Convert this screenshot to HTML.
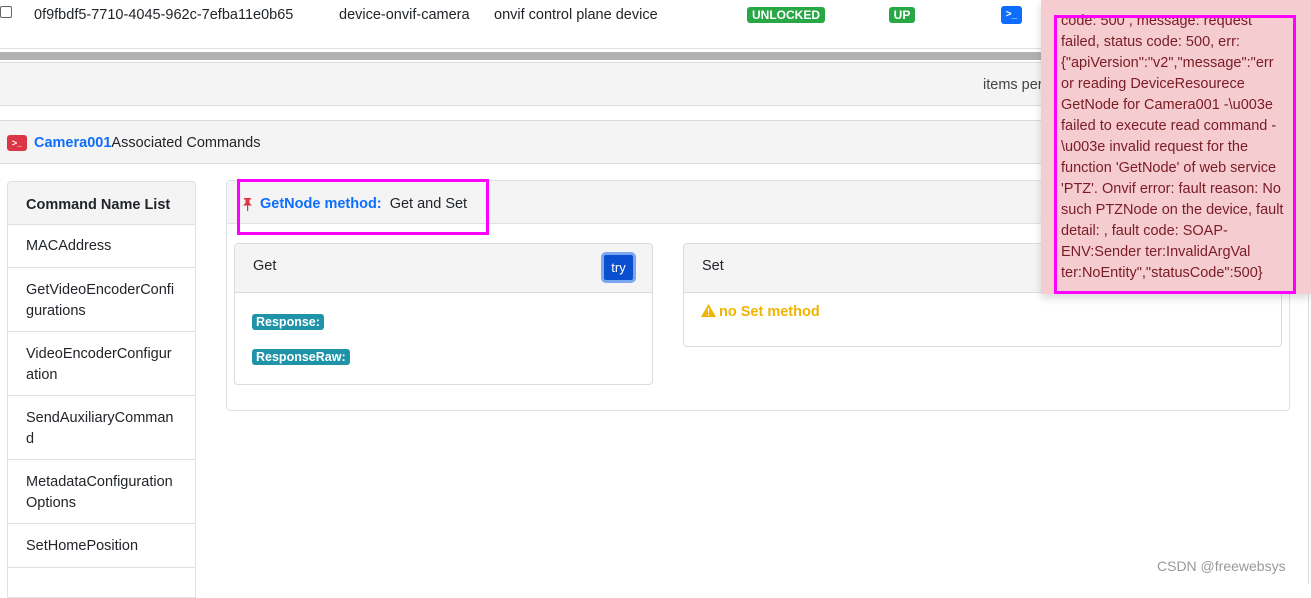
<!DOCTYPE html>
<html><head><meta charset="utf-8"><style>
*{box-sizing:border-box;margin:0;padding:0}
body{width:1311px;height:584px;overflow:hidden;background:#fff;font-family:"Liberation Sans",Arial,sans-serif;font-size:14.5px;color:#212529;position:relative}
.a{position:absolute;white-space:nowrap}
.badge{position:absolute;color:#fff;font-weight:bold;font-size:12px;border-radius:3px;text-align:center;line-height:16px}
.li{position:absolute;left:7px;width:189px;border:1px solid #dee2e6;border-top:none;padding:2px 18px 0;line-height:21px;display:flex;align-items:center;white-space:nowrap}
.tag{position:absolute;background:#1f93a8;color:#fff;font-weight:bold;font-size:12.5px;border-radius:3px;padding:0 4px;line-height:16px;height:16px}
</style></head><body>
<div class="a" style="left:0;top:6px;width:12px;height:12px;border:1px solid #666;border-radius:2px"></div>
<div class="a" style="left:34px;top:7px">0f9fbdf5-7710-4045-962c-7efba11e0b65</div>
<div class="a" style="left:339px;top:7px">device-onvif-camera</div>
<div class="a" style="left:494px;top:7px">onvif control plane device</div>
<div class="badge" style="left:747px;top:7px;width:78px;background:#28a745">UNLOCKED</div>
<div class="badge" style="left:889px;top:7px;width:26px;background:#28a745">UP</div>
<div class="a" style="left:1001px;top:6px;width:21px;height:18px;background:#0d6efd;border-radius:3px;color:#fff;font-size:10px;line-height:18px;text-align:center;font-weight:bold">&gt;_</div>
<div class="a" style="left:0;top:48px;width:1311px;height:1px;background:#dee2e6"></div>
<div class="a" style="left:0;top:52px;width:1311px;height:8px;background:#b1b1b1"></div>
<div class="a" style="left:0;top:62px;width:1311px;height:44px;background:#f4f4f4;border-bottom:1px solid #dcdcdc;border-top:1px solid #dcdcdc"></div>
<div class="a" style="left:983px;top:77px;color:#444">items per</div>
<div class="a" style="left:0;top:120px;width:1311px;height:44px;background:#f4f4f4;border-top:1px solid #dcdcdc;border-bottom:1px solid #dcdcdc"></div>
<div class="a" style="left:7px;top:135px;width:20px;height:16px;background:#dc3545;border-radius:3px;color:#fff;font-size:9px;line-height:16px;text-align:center;font-weight:bold">&gt;_</div>
<div class="a" style="left:34px;top:135px"><b style="color:#0d6efd">Camera001</b>Associated Commands</div>

<div class="a" style="left:7px;top:181px;width:189px;height:44px;background:#f4f4f4;border:1px solid #dee2e6;border-radius:4px 4px 0 0;font-weight:bold;padding:15px 18px 0">Command Name List</div>
<div class="li" style="top:224px;height:44px">MACAddress</div>
<div class="li" style="top:268px;height:64px">GetVideoEncoderConfi<br>gurations</div>
<div class="li" style="top:332px;height:64px">VideoEncoderConfigur<br>ation</div>
<div class="li" style="top:396px;height:64px">SendAuxiliaryComman<br>d</div>
<div class="li" style="top:460px;height:64px">MetadataConfiguration<br>Options</div>
<div class="li" style="top:524px;height:44px">SetHomePosition</div>
<div class="li" style="top:568px;height:30px"></div>

<div class="a" style="left:226px;top:180px;width:1064px;height:231px;border:1px solid #dee2e6;border-radius:4px"></div>
<div class="a" style="left:227px;top:181px;width:1062px;height:43px;background:#f4f4f4;border-bottom:1px solid #dee2e6"></div>
<svg class="a" style="left:243px;top:198px" width="9" height="13" viewBox="0 0 9 13"><path d="M1 0h7v1.5H6.5v3.5L9 7.5H0L2.5 5V1.5H1z M4 7.5h1.2V13H4z" fill="#dc3545"/></svg>
<div class="a" style="left:260px;top:196px"><b style="color:#0d6efd">GetNode method:</b>&nbsp; Get and Set</div>
<div class="a" style="left:237px;top:179px;width:252px;height:56px;border:3px solid #f0f"></div>

<div class="a" style="left:234px;top:243px;width:419px;height:142px;border:1px solid #dcdcdc;border-radius:4px;overflow:hidden">
 <div style="height:49px;background:#f4f4f4;border-bottom:1px solid #dcdcdc;padding:14px 18px">Get</div>
</div>
<div class="a" style="left:601px;top:252px;width:35px;height:31px;background:#0b4fd1;border:3px solid #7aa7f0;border-radius:5px;color:#fff;font-size:13px;line-height:25px;text-align:center">try</div>
<div class="tag" style="left:252px;top:314px">Response:</div>
<div class="tag" style="left:252px;top:349px">ResponseRaw:</div>

<div class="a" style="left:683px;top:243px;width:599px;height:104px;border:1px solid #dcdcdc;border-radius:4px;overflow:hidden">
 <div style="height:49px;background:#f4f4f4;border-bottom:1px solid #dcdcdc;padding:14px 18px">Set</div>
</div>
<svg class="a" style="left:701px;top:304px" width="15" height="13" viewBox="0 0 15 13"><path d="M7.5 0L15 13H0z" fill="#f0b400"/><path d="M6.8 4h1.4l-.2 5H7z M6.8 10h1.4v1.4H6.8z" fill="#fff"/></svg>
<div class="a" style="left:719px;top:304px;color:#f0b400;font-weight:bold">no Set method</div>

<div class="a" style="left:1308px;top:290px;width:1px;height:294px;background:#ddd"></div>
<div class="a" style="left:1041px;top:0;width:270px;height:294px;background:#f5ccd0;box-shadow:0 4px 8px rgba(0,0,0,.15);overflow:hidden">
 <div style="position:absolute;left:20px;top:11px;color:#7a1c26;font-size:14.5px;line-height:21px;white-space:nowrap">code: 500 , message: request<br>failed, status code: 500, err:<br>{"apiVersion":"v2","message":"err<br>or reading DeviceResourece<br>GetNode for Camera001 -\u003e<br>failed to execute read command -<br>\u003e invalid request for the<br>function 'GetNode' of web service<br>'PTZ'. Onvif error: fault reason: No<br>such PTZNode on the device, fault<br>detail: , fault code: SOAP-<br>ENV:Sender ter:InvalidArgVal<br>ter:NoEntity","statusCode":500}</div>
</div>
<div class="a" style="left:1054px;top:15px;width:242px;height:279px;border:3px solid #f0f"></div>
<div class="a" style="left:1157px;top:558px;color:#999;font-size:14px">CSDN @freewebsys</div>
</body></html>
